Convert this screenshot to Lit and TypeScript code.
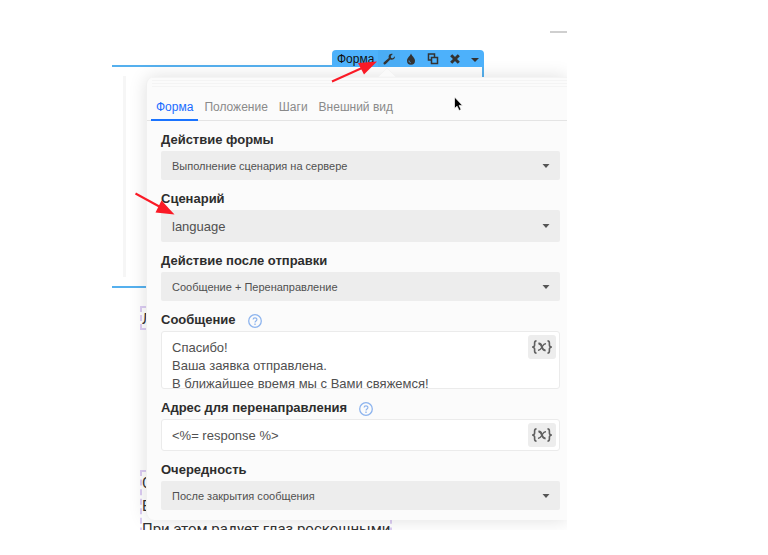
import { LitElement, html, css, svg, nothing } from "lit";
import { customElement, property } from "lit/decorators.js";

const controlStyles = css`
  :host {
    display: block;
    font-family: "Liberation Sans", Arial, sans-serif;
    color: #505050;
  }
  * {
    box-sizing: border-box;
  }
  .head {
    display: flex;
    align-items: center;
    gap: 12px;
    height: 20px;
  }
  .label {
    font-size: 13px;
    line-height: 18px;
    padding-bottom: 2px;
    font-weight: 700;
    color: #2d2d2d;
  }
`;

@customElement("select-field")
class SelectField extends LitElement {
  @property() label = "";
  @property() value = "";
  @property({ type: Boolean }) large = false;

  static styles = [
    controlStyles,
    css`
      .wrap {
        display: grid;
        align-items: center;
      }
      select,
      .caret {
        grid-area: 1 / 1;
      }
      select {
        appearance: none;
        width: 100%;
        height: 29px;
        margin: 0;
        padding: 0 30px 0 11px;
        border: 0;
        border-radius: 2px;
        background: #ededed;
        color: inherit;
        font-family: inherit;
        font-size: 11px;
      }
      select.large {
        height: 32px;
        font-size: 13px;
      }
      .caret {
        justify-self: end;
        margin-right: 10px;
        pointer-events: none;
      }
    `,
  ];

  render() {
    return html`
      <div class="head"><label class="label" for="control">${this.label}</label></div>
      <div class="wrap">
        <select id="control" class=${this.large ? "large" : ""}>
          <option>${this.value}</option>
        </select>
        <svg class="caret" width="8" height="4" viewBox="0 0 8 4" aria-hidden="true">
          <path d="M0.5 0h7L4 4z" fill="#555" />
        </svg>
      </div>
    `;
  }
}

@customElement("text-field")
class TextField extends LitElement {
  @property() label = "";
  @property() value = "";
  @property({ type: Boolean }) multiline = false;
  @property({ type: Boolean }) help = false;

  static styles = [
    controlStyles,
    css`
      .box {
        display: flex;
        align-items: flex-start;
        border: 1px solid #ebebeb;
        border-radius: 3px;
        background: #fff;
      }
      input,
      textarea {
        flex: 1;
        min-width: 0;
        margin: 0;
        padding: 0 0 0 10px;
        border: 0;
        outline: 0;
        background: none;
        color: inherit;
        font-family: inherit;
        font-size: 13px;
      }
      input {
        height: 30px;
      }
      textarea {
        display: block;
        height: 56px;
        padding-top: 7px;
        line-height: 18px;
        resize: none;
        overflow: hidden;
        white-space: pre;
      }
      button {
        padding: 0;
        border: 0;
        background: none;
      }
      .insert {
        width: 28px;
        height: 24px;
        margin: 3px;
        border-radius: 3px;
        background: #ededed;
        display: grid;
        place-items: center;
      }
      .help {
        display: grid;
      }
    `,
  ];

  render() {
    return html`
      <div class="head">
        <label class="label" for="control">${this.label}</label>
        ${this.help
          ? html`<button class="help" aria-label="Справка">
              <svg width="14" height="14" viewBox="0 0 14 14" fill="none" stroke="#8db4ee">
                <circle cx="7" cy="7" r="6.3" stroke-width="1.3" />
                <path d="M5.1 5.6C5.1 3.3 8.9 3.3 8.9 5.5 8.9 7 7 6.9 7 8.5" stroke-width="1.2" />
                <path d="M7 9.6v1.3" stroke-width="1.3" />
              </svg>
            </button>`
          : nothing}
      </div>
      <div class="box">
        ${this.multiline
          ? html`<textarea id="control" .value=${this.value}></textarea>`
          : html`<input id="control" type="text" .value=${this.value} />`}
        <button class="insert" aria-label="Вставить переменную">
          <svg width="22" height="14" viewBox="0 0 22 14" fill="none" stroke="#606060" stroke-width="1.6">
            <path d="M5.5 .9C3.8.9 3.6 1.6 3.6 3v1.9C3.6 6.2 3 6.8 1.2 7c1.8.2 2.4.8 2.4 2.1V11c0 1.4.2 2.1 1.9 2.1" />
            <path d="M16.5 .9c1.7 0 1.9.7 1.9 2.1v1.9c0 1.3.6 1.9 2.4 2.1-1.8.2-2.4.8-2.4 2.1V11c0 1.4-.2 2.1-1.9 2.1" />
            <path d="M7.4 3.7c2.4-.6 2.700 1.200 3.500 3.300s1.200 3.800 3.700 3.200" stroke-width="2" />
            <path d="M15 3.800C12.600 3.400 12 5.500 11 7S9.400 10.600 7 10.200" stroke-width="1.300" />
          </svg>
        </button>
      </div>
    `;
  }
}

const toolIcons = [
  {
    name: "Настройки",
    active: true,
    shape: svg`<path d="M11.9 3.2 9.9 5.2 8.2 4.9 7.8 3.1 9.8 1.1C8 .4 6.2 1.2 5.7 3c-.2.7-.1 1.3.1 1.9L.9 9.2c-1.3 1.3.5 3.2 1.900 1.900L7.300 6.400c2.500 1 5-.7 4.600-3.200z"/>`,
  },
  {
    name: "Цвет",
    active: false,
    shape: svg`<path d="M6 .5C7 3.300 10 4.900 10 7.700a4 4 0 0 1-8 0C2 4.900 5 3.300 6 .5z"/><path d="M4 7.500c0 1.300.6 2 1.700 2.200" stroke="#4db1fb" stroke-width=".8" fill="none"/>`,
  },
  {
    name: "Копировать",
    active: false,
    shape: svg`<path d="M4.500 7H1.500V1h6v3M4.500 4.500h6v6h-6z" fill="none" stroke="#333" stroke-width="1.500"/>`,
  },
  {
    name: "Удалить",
    active: false,
    shape: svg`<path d="M2.200 2.200 9.800 9.800M9.800 2.200 2.200 9.800" stroke="#333" stroke-width="3"/>`,
  },
  {
    name: "Ещё",
    active: false,
    shape: svg`<path d="M2 5h8L6 9z"/>`,
  },
];

@customElement("app-root")
class AppRoot extends LitElement {
  static styles = css`
    :host {
      display: block;
      background: #fff;
      font-family: "Liberation Sans", Arial, sans-serif;
    }
    * {
      box-sizing: border-box;
    }
    .page {
      padding: 30px 201px 25px 112px;
    }
    .canvas {
      position: relative;
      display: flex;
      flex-direction: column;
      overflow: hidden;
      padding: 20px 0 10px;
    }
    .toolbar {
      position: relative;
      z-index: 2;
      align-self: flex-end;
      display: flex;
      align-items: stretch;
      width: 152px;
      height: 17px;
      margin: 0 83px 10px 0;
      padding-left: 5px;
      border-radius: 4px 4px 0 0;
      background: #4db1fb;
    }
    .toolbar-title {
      width: 41px;
      font-size: 12px;
      line-height: 18px;
      color: #111;
    }
    .tool {
      display: grid;
      place-items: center;
      width: 22px;
      padding: 0;
      border: 0;
      background: none;
      fill: #333;
    }
    .tool:last-child {
      width: 18px;
    }
    .tool.active {
      background: #4aacf4;
    }
    .block {
      position: absolute;
      top: 35px;
      left: -2px;
      right: 83px;
      height: 223px;
      border: 2px solid #55b0ee;
    }
    .rule {
      position: absolute;
      top: 46px;
      left: 11px;
      width: 3px;
      height: 201px;
      background: #f6f6f6;
    }
    .edge {
      position: absolute;
      top: 1px;
      right: 0;
      width: 17px;
      height: 2px;
      background: #cfcfcf;
    }
    .copy {
      position: absolute;
      left: 28px;
      margin: 0;
      border: 2px dashed #dccdf3;
      font-family: Roboto, sans-serif;
      font-size: 15px;
      line-height: 23px;
      color: #333;
      white-space: nowrap;
    }
    .copy.title {
      top: 276px;
      width: 250px;
      height: 24px;
      line-height: 22px;
    }
    .copy.body {
      top: 440px;
    }
    .panel {
      position: relative;
      z-index: 1;
      margin-left: 34px;
      padding-bottom: 10px;
      border-left: 1px solid #f0f0f0;
      border-radius: 8px 0 0 8px;
      background: #fbfbfb;
      box-shadow: 0 0 18px rgba(0, 0, 0, 0.13);
    }
    .notch {
      position: absolute;
      top: -9px;
      right: 171px;
      fill: #fafafa;
    }
    .grip {
      height: 12px;
      margin-left: 5px;
      background: repeating-linear-gradient(#f4f4f4 0 1px, #fbfbfb 1px 3px);
    }
    .tabs {
      display: flex;
      gap: 1px;
      height: 32px;
      padding-left: 4px;
      border-bottom: 1px solid #e4e4e4;
    }
    .tab {
      height: 32px;
      padding: 6px 5px 0;
      border: 0;
      border-bottom: 2px solid transparent;
      background: none;
      font-family: inherit;
      font-size: 12px;
      line-height: 20px;
      color: #8a8a8a;
    }
    .tab.active {
      border-color: #1a73ff;
      color: #1a6cff;
    }
    .fields {
      display: grid;
      gap: 10px;
      padding: 10px 7px 0 14px;
    }
    .marks {
      position: absolute;
      z-index: 3;
      top: 0;
      left: 0;
      pointer-events: none;
    }
  `;

  render() {
    return html`
      <main class="page">
        <section class="canvas">
          <div class="edge"></div>
          <div class="block"></div>
          <div class="rule"></div>
          <p class="copy title">Л</p>
          <p class="copy body">С<br />В<br />При этом радует глаз роскошными</p>

          <div class="toolbar">
            <span class="toolbar-title">Форма</span>
            ${toolIcons.map(
              (t) => html`<button class="tool ${t.active ? "active" : ""}" aria-label=${t.name}>
                <svg width="12" height="12" viewBox="0 0 12 12">${t.shape}</svg>
              </button>`
            )}
          </div>

          <div class="panel">
            <svg class="notch" width="18" height="9" viewBox="0 0 18 9" aria-hidden="true">
              <path d="M0 9 9 0l9 9z" stroke="#eee" stroke-width=".5" />
            </svg>
            <div class="grip"></div>
            <nav class="tabs">
              ${["Форма", "Положение", "Шаги", "Внешний вид"].map(
                (t, i) => html`<button class="tab ${i === 0 ? "active" : ""}">${t}</button>`
              )}
            </nav>
            <form class="fields">
              <select-field label="Действие формы" value="Выполнение сценария на сервере"></select-field>
              <select-field label="Сценарий" value="language" large></select-field>
              <select-field label="Действие после отправки" value="Сообщение + Перенаправление"></select-field>
              <text-field
                label="Сообщение"
                help
                multiline
                .value=${"Спасибо!\nВаша заявка отправлена.\nВ ближайшее время мы с Вами свяжемся!"}
              ></text-field>
              <text-field label="Адрес для перенаправления" help .value=${"<%= response %>"}></text-field>
              <select-field label="Очередность" value="После закрытия сообщения"></select-field>
            </form>
          </div>

          <svg class="marks" width="455" height="200" viewBox="0 0 455 200" aria-hidden="true">
            <g stroke="#fa1a26" fill="#fa1a26">
              <path d="M220 51.5 250 38" stroke-width="2" />
              <path d="M265 31.5 246 33 252 44.5z" stroke="none" />
              <path d="M23.5 163.5 50 178" stroke-width="2" />
              <path d="M62.5 184.5 49.5 170.5 43.5 182.5z" stroke="none" />
            </g>
            <path
              d="M342.5 67v11.5l2.6-2.3 2 4.3 2-1-2-4.1h3.4z"
              fill="#000"
              stroke="#fff"
              stroke-width=".7"
            />
          </svg>
        </section>
      </main>
    `;
  }
}
